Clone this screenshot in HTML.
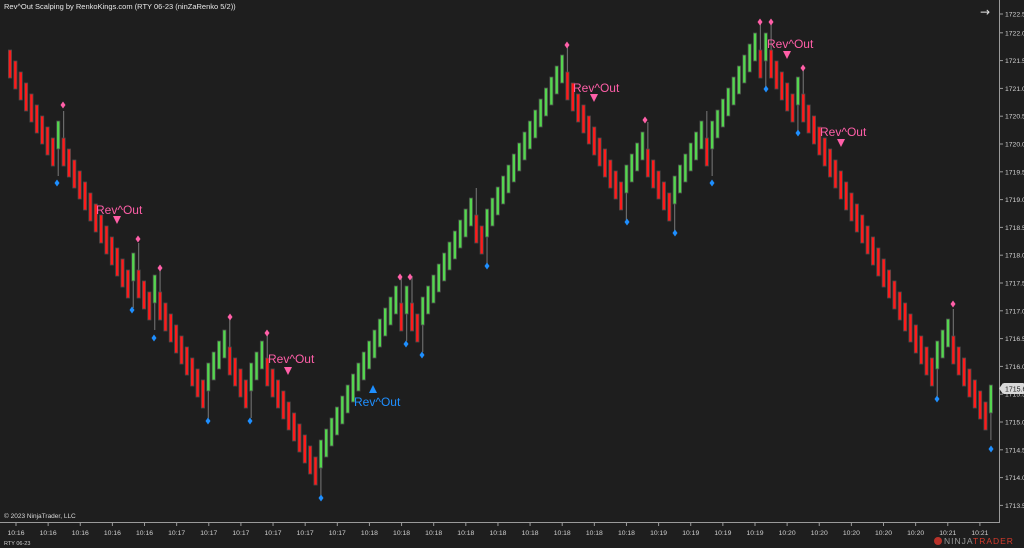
<!DOCTYPE html>
<html><head><meta charset="utf-8"><style>
html,body{margin:0;padding:0;background:#1e1e1e;width:1024px;height:548px;overflow:hidden;font-family:"Liberation Sans",sans-serif}
svg{position:absolute;left:0;top:0}
</style></head><body>
<svg id="s" width="1024" height="548" xmlns="http://www.w3.org/2000/svg">
<rect width="1024" height="548" fill="#1e1e1e"/>
<text x="4" y="9" fill="#e8e8e8" font-size="7.5" font-family="Liberation Sans">Rev^Out Scalping by RenkoKings.com (RTY 06-23 (ninZaRenko 5/2))</text>
<text x="980" y="16" fill="#e0e0e0" font-size="12" font-family="DejaVu Sans">→</text>
<line x1="999.5" y1="0" x2="999.5" y2="522" stroke="#9a9a9a" stroke-width="1"/>
<line x1="0" y1="522.5" x2="1000" y2="522.5" stroke="#9a9a9a" stroke-width="1"/>
<text x="4" y="518" fill="#d8d8d8" font-size="6.5" font-family="Liberation Sans">© 2023 NinjaTrader, LLC</text>
<text x="4" y="545" fill="#cfcfcf" font-size="5.5" font-family="Liberation Sans">RTY 06-23</text>
<g id="g"></g>
<rect x="1003" y="383" width="21" height="11" rx="1" fill="#d9d9d9"/>
<polygon points="999,388.5 1003,383 1003,394" fill="#d9d9d9"/>
<text x="1005" y="391.5" fill="#202020" font-size="7" font-family="Liberation Sans">1715.6</text>
<circle cx="938" cy="541" r="4" fill="#b8322a"/>
<text x="944" y="544" fill="#9a9a9a" font-size="8.5" letter-spacing="1" font-family="Liberation Sans">NINJA</text>
<text x="973" y="544" fill="#d43a2a" font-size="8.5" letter-spacing="1" font-family="Liberation Sans">TRADER</text>
</svg>
<script>
(function(){
"use strict";
var g=document.getElementById('g');var h='';
var p=['1722.5','1722.0','1721.5','1721.0','1720.5','1720.0','1719.5','1719.0','1718.5','1718.0','1717.5','1717.0','1716.5','1716.0','1715.5','1715.0','1714.5','1714.0','1713.5'];
for(var k=0;k<p.length;k++){var y=(k==0)?14:5+k*27.8;
h+='<line x1="999" y1="'+y+'" x2="1003" y2="'+y+'" stroke="#9a9a9a"/>';
h+='<text x="1005" y="'+(y+2.5)+'" fill="#d0d0d0" font-size="6.8" font-family="Liberation Sans">'+p[k]+'</text>';}
var tl=['10:16','10:16','10:16','10:16','10:16','10:17','10:17','10:17','10:17','10:17','10:17','10:18','10:18','10:18','10:18','10:18','10:18','10:18','10:18','10:18','10:19','10:19','10:19','10:19','10:20','10:20','10:20','10:20','10:20','10:21','10:21'];
for(var k2=0;k2<tl.length;k2++){var xx=16+k2*32.13;
h+='<line x1="'+xx+'" y1="522" x2="'+xx+'" y2="526" stroke="#9a9a9a"/>';
h+='<text x="'+xx+'" y="535" text-anchor="middle" fill="#d0d0d0" font-size="6.8" font-family="Liberation Sans">'+tl[k2]+'</text>';}
var seq=[['D',9],['U',1],['D',13],['U',1],['D',3],['U',1],['D',9],['U',4],['D',4],['U',3],['D',10],['U',15],['D',1],['U',1],['D',2],['U',10],['D',2],['U',15],['D',11],['U',4],['D',5],['U',6],['D',1],['U',9],['D',1],['U',1],['D',5],['U',1],['D',25],['U',3],['D',7],['U',1]];
var dirs=[];seq.forEach(function(s){for(var j=0;j<s[1];j++)dirs.push(s[0]);});
var c=64,prev='D';
for(var i=0;i<dirs.length;i++){var d=dirs[i];
 if(i>0){if(d==prev)c+=(d=='D'?11:-11);else c+=(d=='D'?17:-17);}
 var x=10+5.36*i;var ty=c-14;
 if(i>0&&d!=prev){
   if(d=='U')h+='<line x1="'+x+'" y1="'+(c+14)+'" x2="'+x+'" y2="'+(c+41)+'" stroke="#6a6a6a" stroke-width="1.2"/>';
   else h+='<line x1="'+x+'" y1="'+(c-14)+'" x2="'+x+'" y2="'+(c-41)+'" stroke="#6a6a6a" stroke-width="1.2"/>';}
 h+='<rect x="'+(x-1.6)+'" y="'+ty+'" width="3.2" height="28" fill="'+(d=='U'?'#55d64f':'#ff1a1a')+'" stroke="#4a4a4a" stroke-width="0.8"/>';
 prev=d;}
function dia(x,y,col){h+='<polygon points="'+x+','+(y-3.5)+' '+(x+2.5)+','+y+' '+x+','+(y+3.5)+' '+(x-2.5)+','+y+'" fill="'+col+'"/>';}
var pk=[[63,105],[138,239],[160,268],[230,317],[267,333],[400,277],[410,277],[567,45],[645,120],[760,22],[771,22],[803,68],[953,304]];
var bl=[[57,183],[132,310],[154,338],[208,421],[250,421],[321,498],[406,344],[422,355],[487,266],[627,222],[675,233],[712,183],[766,89],[798,133],[937,399],[991,449]];
pk.forEach(function(a){dia(a[0],a[1],'#ff5fa8');});bl.forEach(function(a){dia(a[0],a[1],'#1e8fff');});
var rv=[[96,214,117,220],[268,363,288,371],[573,92,594,98],[767,48,787,55],[820,136,841,143]];
rv.forEach(function(a){h+='<text x="'+a[0]+'" y="'+a[1]+'" fill="#ff5fa8" font-size="12" font-family="Liberation Sans">Rev^Out</text>';
h+='<polygon points="'+(a[2]-4)+','+(a[3]-4)+' '+(a[2]+4)+','+(a[3]-4)+' '+a[2]+','+(a[3]+4)+'" fill="#ff5fa8"/>';});
h+='<polygon points="369,393 377,393 373,385" fill="#1e8fff"/>';
h+='<text x="354" y="406" fill="#1e8fff" font-size="12" font-family="Liberation Sans">Rev^Out</text>';
g.innerHTML=h;
})();
</script>
</body></html>
